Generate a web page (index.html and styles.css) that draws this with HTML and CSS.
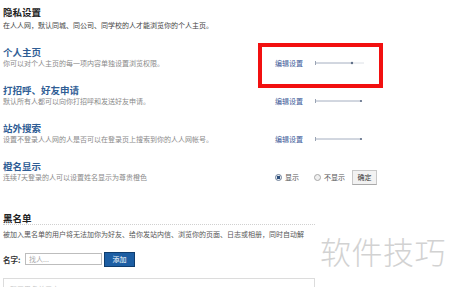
FILE: index.html
```html
<!DOCTYPE html>
<html lang="zh-CN">
<head>
    <meta charset="UTF-8">
    <title>隐私设置</title>
    <link rel="stylesheet" href="styles.css">
</head>
<body>
    <div class="page">
        <div class="section-head">
            <h2>隐私设置</h2>
            <p class="intro">在人人网，默认同城、同公司、同学校的人才能浏览你的个人主页。</p>
        </div>

        <div class="items">
            <div class="item">
                <div class="info">
                    <h3>个人主页</h3>
                    <p>你可以对个人主页的每一项内容单独设置浏览权限。</p>
                </div>
                <div class="ctrl">
                    <a href="#">编辑设置</a>
                    <svg class="slider" width="52" height="6" viewBox="0 0 52 6">
                        <line x1="0.5" y1="1" x2="0.5" y2="5" stroke="#9aa4b4"/>
                        <line x1="1" y1="3" x2="37" y2="3" stroke="#8e9ab0" stroke-width="0.8"/>
                        <line x1="37" y1="3" x2="49" y2="3" stroke="#d3d8df" stroke-width="0.8"/>
                        <circle cx="37" cy="3" r="1.2" fill="#5f6f88"/>
                    </svg>
                </div>
            </div>

            <div class="item">
                <div class="info">
                    <h3>打招呼、好友申请</h3>
                    <p>默认所有人都可以向你打招呼和发送好友申请。</p>
                </div>
                <div class="ctrl">
                    <a href="#">编辑设置</a>
                    <svg class="slider" width="52" height="6" viewBox="0 0 52 6">
                        <line x1="0.5" y1="1" x2="0.5" y2="5" stroke="#9aa4b4"/>
                        <line x1="1" y1="3" x2="46" y2="3" stroke="#8e9ab0" stroke-width="0.8"/>
                        <circle cx="46" cy="3" r="1.1" fill="#5f6f88"/>
                    </svg>
                </div>
            </div>

            <div class="item">
                <div class="info">
                    <h3>站外搜索</h3>
                    <p>设置不登录人人网的人是否可以在登录页上搜索到你的人人网帐号。</p>
                </div>
                <div class="ctrl">
                    <a href="#">编辑设置</a>
                    <svg class="slider" width="52" height="6" viewBox="0 0 52 6">
                        <line x1="0.5" y1="1" x2="0.5" y2="5" stroke="#9aa4b4"/>
                        <line x1="1" y1="3" x2="46" y2="3" stroke="#8e9ab0" stroke-width="0.8"/>
                        <circle cx="46" cy="3" r="1.1" fill="#5f6f88"/>
                    </svg>
                </div>
            </div>

            <div class="item">
                <div class="info">
                    <h3>橙名显示</h3>
                    <p>连续7天登录的人可以设置姓名显示为尊贵橙色</p>
                </div>
                <div class="ctrl radios">
                    <label class="radio"><span class="dot checked"></span>显示</label>
                    <label class="radio"><span class="dot"></span>不显示</label>
                    <button type="button" class="btn-ok">确定</button>
                </div>
            </div>
        </div>

        <div class="blacklist">
            <h2 class="dotted">黑名单</h2>
            <p class="intro clip">被加入黑名单的用户将无法加你为好友、给你发站内信、浏览你的页面、日志或相册，同时自动解</p>
            <div class="add-row">
                <span class="label">名字:</span>
                <input type="text" class="name-input" placeholder="找人...">
                <button type="button" class="btn-add">添加</button>
            </div>
            <div class="list-box">
                <span>暂无黑名单用户</span>
            </div>
        </div>
    </div>

    <div class="highlight"></div>
    <div class="watermark">软件技巧</div>
</body>
</html>
```

FILE: styles.css
```css
body{
    margin: 0;
    background: #fff;
    font-family: "Noto Sans CJK SC", "DejaVu Sans", sans-serif;
    color: #333;
}
h2, h3, p{
    margin: 0;
}
.page{
    width: 390px;
    padding: 6px 0 0 3px;
}
h2{
    font-size: 9.5px;
    line-height: 12px;
    font-weight: bold;
    color: #222;
}
.intro{
    font-size: 7px;
    line-height: 9px;
    color: #444;
    margin-top: 2.5px;
}
.items{
    display: flex;
    flex-direction: column;
    gap: 17.6px;
    margin-top: 17.5px;
}
.item{
    display: grid;
    grid-template-columns: 272px auto;
}
.info h3{
    font-size: 9.5px;
    line-height: 11px;
    font-weight: bold;
    color: #2f5d95;
}
.info p{
    font-size: 7px;
    line-height: 9px;
    color: #8a8a8a;
    margin-top: 0.5px;
    white-space: nowrap;
}
.ctrl{
    align-self: end;
    display: flex;
    align-items: center;
    gap: 12px;
    height: 9px;
    white-space: nowrap;
}
.ctrl a{
    font-size: 7px;
    color: #3b5998;
    text-decoration: none;
}
.slider{
    display: block;
}
.radios{
    gap: 0;
    margin-bottom: -3px;
    height: 15px;
}
.radio{
    display: flex;
    align-items: center;
    font-size: 7px;
    color: #555;
    margin-right: 7px;
}
.radio:first-child{
    margin-right: 15px;
}
.dot{
    box-sizing: border-box;
    width: 7px;
    height: 7px;
    border: 1px solid #a8a8a8;
    border-radius: 50%;
    background: #f0f0f0;
    margin-right: 3px;
}
.dot.checked{
    border-color: #6b7d96;
    background: radial-gradient(circle, #2d4f7c 0 1.5px, #e8ecf2 2px);
}
.btn-ok{
    font-family: inherit;
    font-size: 7px;
    color: #333;
    width: 25px;
    height: 15px;
    padding: 0;
    background: #f2f2f2;
    border: 1px solid #c8c8c8;
    border-bottom-color: #a9a9a9;
}
.blacklist{
    width: 312px;
    overflow: hidden;
    margin-top: 30px;
}
.dotted{
    border-bottom: 1px dotted #d0d0d0;
}
.clip{
    white-space: nowrap;
    margin-top: 5px;
    color: #555;
}
.add-row{
    display: flex;
    align-items: center;
    margin-top: 13px;
    height: 15px;
}
.label{
    font-size: 7.5px;
    font-weight: bold;
    color: #333;
    width: 22px;
}
.name-input{
    box-sizing: border-box;
    width: 77px;
    height: 12px;
    border: 1px solid #bdbdbd;
    padding: 0 0 0 3px;
    font-family: inherit;
    font-size: 7px;
    outline: none;
}
.name-input::placeholder{
    color: #aaa;
}
.btn-add{
    box-sizing: border-box;
    width: 31px;
    height: 15px;
    margin-left: 2px;
    padding: 0;
    background: #1d5ea3;
    border: 1px solid #0f3d6e;
    color: #fff;
    font-family: inherit;
    font-size: 7px;
}
.list-box{
    box-sizing: border-box;
    margin-top: 11px;
    border: 1px solid #dcdcdc;
    height: 40px;
    padding: 5px 0 0 6px;
    font-size: 7px;
    color: #c8c8c8;
}
.highlight{
    position: absolute;
    left: 258px;
    top: 43px;
    width: 125px;
    height: 45px;
    box-sizing: border-box;
    border: 4px solid #f21010;
}
.watermark{
    position: absolute;
    left: 320px;
    top: 232px;
    font-size: 31px;
    line-height: 38px;
    color: #d2d2d2;
    font-weight: 300;
    letter-spacing: 0.5px;
}
```
